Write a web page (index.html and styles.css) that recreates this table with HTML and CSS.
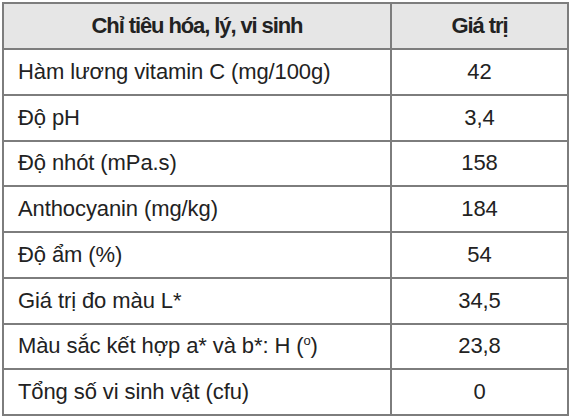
FILE: index.html
```html
<!DOCTYPE html>
<html lang="vi">
<head>
  <meta charset="UTF-8">
  <title>Chỉ tiêu hóa, lý, vi sinh</title>
  <link rel="stylesheet" href="styles.css">
</head>
<body>
  <table class="spec-table">
    <thead>
      <tr>
        <th class="name-col">Chỉ tiêu hóa, lý, vi sinh</th>
        <th class="value-col">Giá trị</th>
      </tr>
    </thead>
    <tbody>
      <tr><td>Hàm lương vitamin C (mg/100g)</td><td class="value">42</td></tr>
      <tr><td>Độ pH</td><td class="value">3,4</td></tr>
      <tr><td>Độ nhót (mPa.s)</td><td class="value">158</td></tr>
      <tr><td>Anthocyanin (mg/kg)</td><td class="value">184</td></tr>
      <tr><td>Độ ẩm (%)</td><td class="value">54</td></tr>
      <tr><td>Giá trị đo màu L*</td><td class="value">34,5</td></tr>
      <tr><td>Màu sắc kết hợp a* và b*: H (<sup>o</sup>)</td><td class="value">23,8</td></tr>
      <tr><td>Tổng số vi sinh vật (cfu)</td><td class="value">0</td></tr>
    </tbody>
  </table>
</body>
</html>
```

FILE: styles.css
```css
body {
  margin: 0;
  padding: 2px;
  background-color: white;
  font-family: "Liberation Sans", Arial, sans-serif;
  color: #222;
}
.spec-table {
  border-collapse: collapse;
  table-layout: fixed;
  width: 567px;
  font-size: 22px;
  letter-spacing: -0.1px;
}
.spec-table th,
.spec-table td {
  border: 2px solid #7d7d7d;
  height: 43.75px;
  padding: 0 14px;
}
.spec-table th {
  background-color: #e6e6e6;
  font-weight: bold;
  letter-spacing: -1.1px;
  text-align: center;
  height: 44px;
}
.name-col {
  width: 358px;
}
.value,
.value-col {
  text-align: center;
}
sup {
  font-size: 13px;
  vertical-align: 8px;
  line-height: 0;
}
```
